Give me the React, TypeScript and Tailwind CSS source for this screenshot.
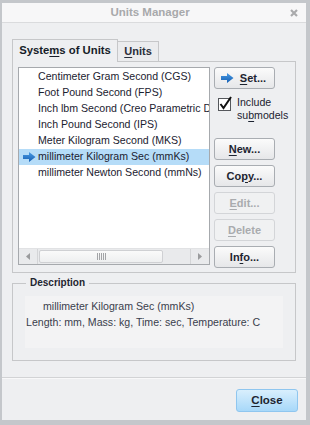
import type { ReactNode } from 'react';

const systems = [
	'Centimeter Gram Second (CGS)',
	'Foot Pound Second (FPS)',
	'Inch lbm Second (Creo Parametric Default)',
	'Inch Pound Second (IPS)',
	'Meter Kilogram Second (MKS)',
	'millimeter Kilogram Sec (mmKs)',
	'millimeter Newton Second (mmNs)'
];

const selectedIndex = 5;

function BlueArrow() {
	return (
		<svg width="13" height="10" viewBox="0 0 13 10">
			<defs>
				<linearGradient id="ar" x1="0" y1="0" x2="0" y2="1">
					<stop offset="0" stopColor="#4a9be4" />
					<stop offset="1" stopColor="#155fb3" />
				</linearGradient>
			</defs>
			<polygon points="0,3 6,3 6,0 12.5,5 6,10 6,7 0,7" fill="url(#ar)" />
		</svg>
	);
}

interface KeyLabelProps {
	before?: string;
	mnemonic: string;
	after?: string;
}

function KeyLabel({ before = '', mnemonic, after = '' }: KeyLabelProps) {
	return (
		<span>
			{before}
			<span className="underline underline-offset-2">{mnemonic}</span>
			{after}
		</span>
	);
}

interface DlgButtonProps {
	children: ReactNode;
	disabled?: boolean;
	className?: string;
}

function DlgButton({ children, disabled, className = '' }: DlgButtonProps) {
	return (
		<div
			className={`flex h-[22px] w-[61px] items-center justify-center gap-[6px] rounded-[3px] border text-[11px] font-bold ${
				disabled
					? 'border-[#d3d5d8] bg-[#f0f1f2] text-[#a9abae]'
					: 'border-[#a9adb2] bg-gradient-to-b from-[#fbfbfb] to-[#e6e7e9] text-[#1d2430]'
			} ${className}`}
		>
			{children}
		</div>
	);
}

function ScrollBar() {
	return (
		<div className="flex h-[16px] border-t border-[#e1e2e4] bg-[#e9eaec]">
			<div className="flex w-[19px] items-center justify-center border-r border-[#d4d5d7]">
				<svg width="4" height="7" viewBox="0 0 4 7">
					<polygon points="4,0 0,3.5 4,7" fill="#9a9b9d" />
				</svg>
			</div>
			<div className="my-[1px] ml-[1px] flex w-[124px] items-center justify-center rounded-[2px] border border-[#cfd0d3] bg-gradient-to-b from-[#fafafa] to-[#eeeff0]">
				<svg width="9" height="7" viewBox="0 0 9 7">
					{[0.5, 2.5, 4.5, 6.5, 8.5].map((x) => (
						<line key={x} x1={x} y1="0" x2={x} y2="7" stroke="#a3a4a7" strokeWidth="1" />
					))}
				</svg>
			</div>
			<div className="flex-1" />
			<div className="flex w-[19px] items-center justify-center border-l border-[#d4d5d7]">
				<svg width="4" height="7" viewBox="0 0 4 7">
					<polygon points="0,0 4,3.5 0,7" fill="#9a9b9d" />
				</svg>
			</div>
		</div>
	);
}

export default function App() {
	return (
		<div
			className="flex h-[425px] w-[310px] bg-[#c4c7cb] pb-[5px] pl-[2px] pr-[6px] pt-[3px]"
			style={{ fontFamily: '"Liberation Sans", Arial, sans-serif' }}
		>
			<div className="flex flex-1 flex-col bg-[#eeeff1]">
				{/* title bar */}
				<div className="flex h-[20px] items-center border-b border-[#dadbdd] bg-[#f7f7f8]">
					<div className="flex-1" />
					<span className="text-[11.5px] font-bold text-[#a8a9ab]">Units Manager</span>
					<div className="flex flex-1 justify-end pr-[8px]">
						<svg width="8" height="8" viewBox="0 0 8 8">
							<path d="M1 1 L7 7 M7 1 L1 7" stroke="#a9aaac" strokeWidth="2.2" />
						</svg>
					</div>
				</div>

				<div className="px-[10px] pt-[16px]">
					{/* tabs */}
					<div className="flex h-[22px] items-end">
						<div className="relative z-10 -mb-px flex h-[23px] w-[106px] items-center justify-center border-l border-r border-t border-[#c6c7c9] bg-[#eeeff1] pb-[1px] text-[11.3px] font-bold text-[#161c28]">
							<KeyLabel before="Syste" mnemonic="m" after="s of Units" />
						</div>
						<div className="flex h-[20px] w-[41px] items-center justify-center border-r border-t border-[#c6c7c9] bg-[#ebecee] text-[11px] font-bold text-[#2a2f3a]">
							<KeyLabel mnemonic="U" after="nits" />
						</div>
					</div>

					{/* tab panel */}
					<div className="flex h-[212px] w-[284px] border border-[#c6c7c9] pl-[5px] pt-[5px]">
						<div className="flex h-[198px] w-[192px] flex-col border border-[#a6a9ad] bg-white">
							<div className="flex-1 pt-[1px]">
								{systems.map((name, i) => (
									<div
										key={name}
										className={`flex h-[16px] items-center overflow-hidden whitespace-nowrap text-[10.6px] text-[#1b2230] ${
											i === selectedIndex ? 'bg-[#b5dcf8]' : ''
										}`}
									>
										<div className="flex w-[19px] shrink-0 justify-center pl-[2px]">
											{i === selectedIndex && <BlueArrow />}
										</div>
										<span>{name}</span>
									</div>
								))}
							</div>
							<ScrollBar />
						</div>

						<div className="ml-[4px] flex flex-col">
							<DlgButton className="pr-[2px]">
								<BlueArrow />
								<KeyLabel mnemonic="S" after="et..." />
							</DlgButton>
							<div className="mt-[7px] flex items-start gap-[3px] pl-[4px]">
								<svg width="16" height="16" viewBox="0 0 16 16" className="shrink-0">
									<rect x="0.5" y="2.5" width="12" height="12" fill="#ffffff" stroke="#55585c" />
									<polyline points="2.5,8 5.5,12 13,1" fill="none" stroke="#111111" strokeWidth="2" />
								</svg>
								<div className="flex flex-col text-[10.6px] leading-[13px] text-[#1b2230]">
									<span>Include</span>
									<span>
										<KeyLabel before="su" mnemonic="b" after="models" />
									</span>
								</div>
							</div>
							<DlgButton className="mt-[16px]">
								<KeyLabel mnemonic="N" after="ew..." />
							</DlgButton>
							<DlgButton className="mt-[5px]">
								<KeyLabel before="Co" mnemonic="p" after="y..." />
							</DlgButton>
							<DlgButton className="mt-[5px]" disabled>
								<KeyLabel mnemonic="E" after="dit..." />
							</DlgButton>
							<DlgButton className="mt-[5px]" disabled>
								<KeyLabel mnemonic="D" after="elete" />
							</DlgButton>
							<DlgButton className="mt-[5px]">
								<KeyLabel before="In" mnemonic="f" after="o..." />
							</DlgButton>
						</div>
					</div>

					{/* description group */}
					<fieldset className="mt-[3px] h-[85px] w-[284px] border border-[#c6c7c9] px-[12px] pt-[6px]">
						<legend className="ml-[1px] px-[4px] text-[10px] font-bold leading-[14px] text-[#1f2530]">
							Description
						</legend>
						<div className="h-[52px] bg-[#f3f3f4] pl-[1px] pt-[2px] text-[10.6px] leading-[16px] text-[#3a404c]">
							<div className="pl-[17px]">{systems[selectedIndex]}</div>
							<div>Length: mm, Mass: kg, Time: sec, Temperature: C</div>
						</div>
					</fieldset>
				</div>

				<div className="mt-[16px] border-t border-[#d2d3d5] border-b border-b-[#f8f8f9]" />

				<div className="flex justify-end pr-[8px] pt-[10px]">
					<div className="flex h-[23px] w-[62px] items-center justify-center rounded-[3px] border border-[#8fc6ef] bg-gradient-to-b from-[#d9effd] to-[#a7d8f9] text-[11.5px] font-bold text-[#1d2430]">
						<KeyLabel mnemonic="C" after="lose" />
					</div>
				</div>
			</div>
		</div>
	);
}
